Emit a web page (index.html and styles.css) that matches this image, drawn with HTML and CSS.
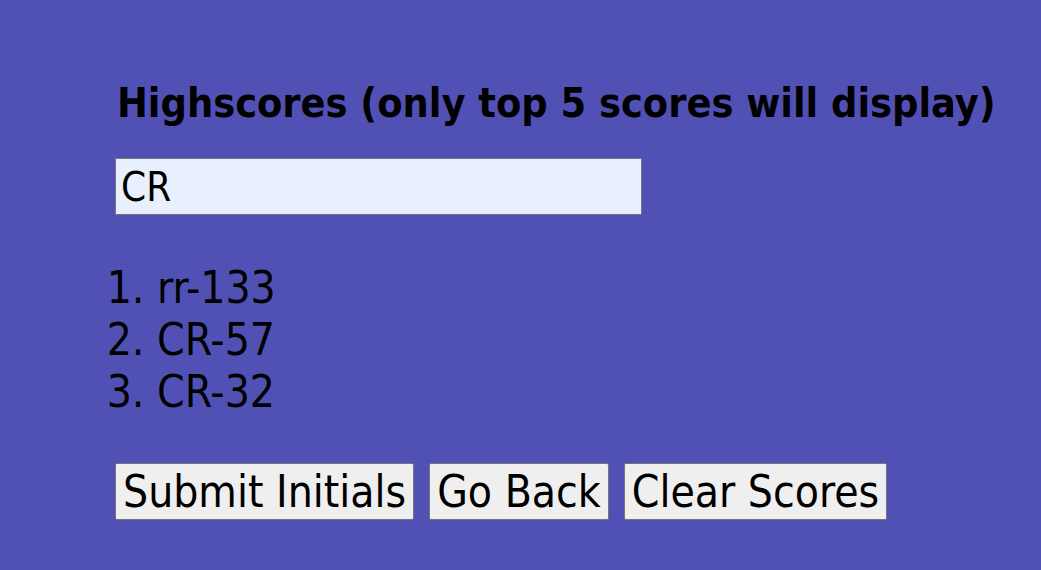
FILE: index.html
```html
<!DOCTYPE html>
<html>
<head>
<meta charset="utf-8">
<link rel="stylesheet" href="styles.css">
</head>
<body>
<main class="scores">
  <h1 class="title">Highscores (only top 5 scores will display)</h1>
  <input class="initials" type="text" value="CR">
  <ol class="list">
    <li>rr-133</li>
    <li>CR-57</li>
    <li>CR-32</li>
  </ol>
  <div class="actions">
    <button class="btn">Submit Initials</button>
    <button class="btn">Go Back</button>
    <button class="btn">Clear Scores</button>
  </div>
</main>
</body>
</html>
```

FILE: styles.css
```css
html, body {
  margin: 0;
  padding: 0;
}
body {
  background: #5151b5;
  font-family: "DejaVu Sans Condensed", "DejaVu Sans", sans-serif;
  font-stretch: condensed;
  color: #000;
  width: 1041px;
  height: 570px;
  overflow: hidden;
}
.scores {
  padding: 78px 0 0 115px;
  display: flex;
  flex-direction: column;
  align-items: flex-start;
}
.title {
  margin: 0 0 0 2px;
  font-size: 41px;
  font-weight: bold;
  line-height: 50px;
}
.initials {
  margin-top: 30px;
  width: 527px;
  height: 57px;
  box-sizing: border-box;
  border: 1px solid #767676;
  background: #e8f0fe;
  font-family: inherit;
  font-stretch: condensed;
  font-size: 40px;
  padding: 0 5px;
  color: #000;
}
.list {
  margin: 47px 0 0 0;
  padding-left: 42px;
  font-size: 44px;
  line-height: 52px;
}
.actions {
  margin-top: 45px;
  display: flex;
  gap: 15px;
}
.btn {
  height: 57px;
  border: 1px solid #767676;
  background: #efefef;
  font-family: inherit;
  font-stretch: condensed;
  font-size: 44px;
  line-height: 51px;
  padding: 0 7px;
  color: #000;
  border-radius: 2px;
}
```
